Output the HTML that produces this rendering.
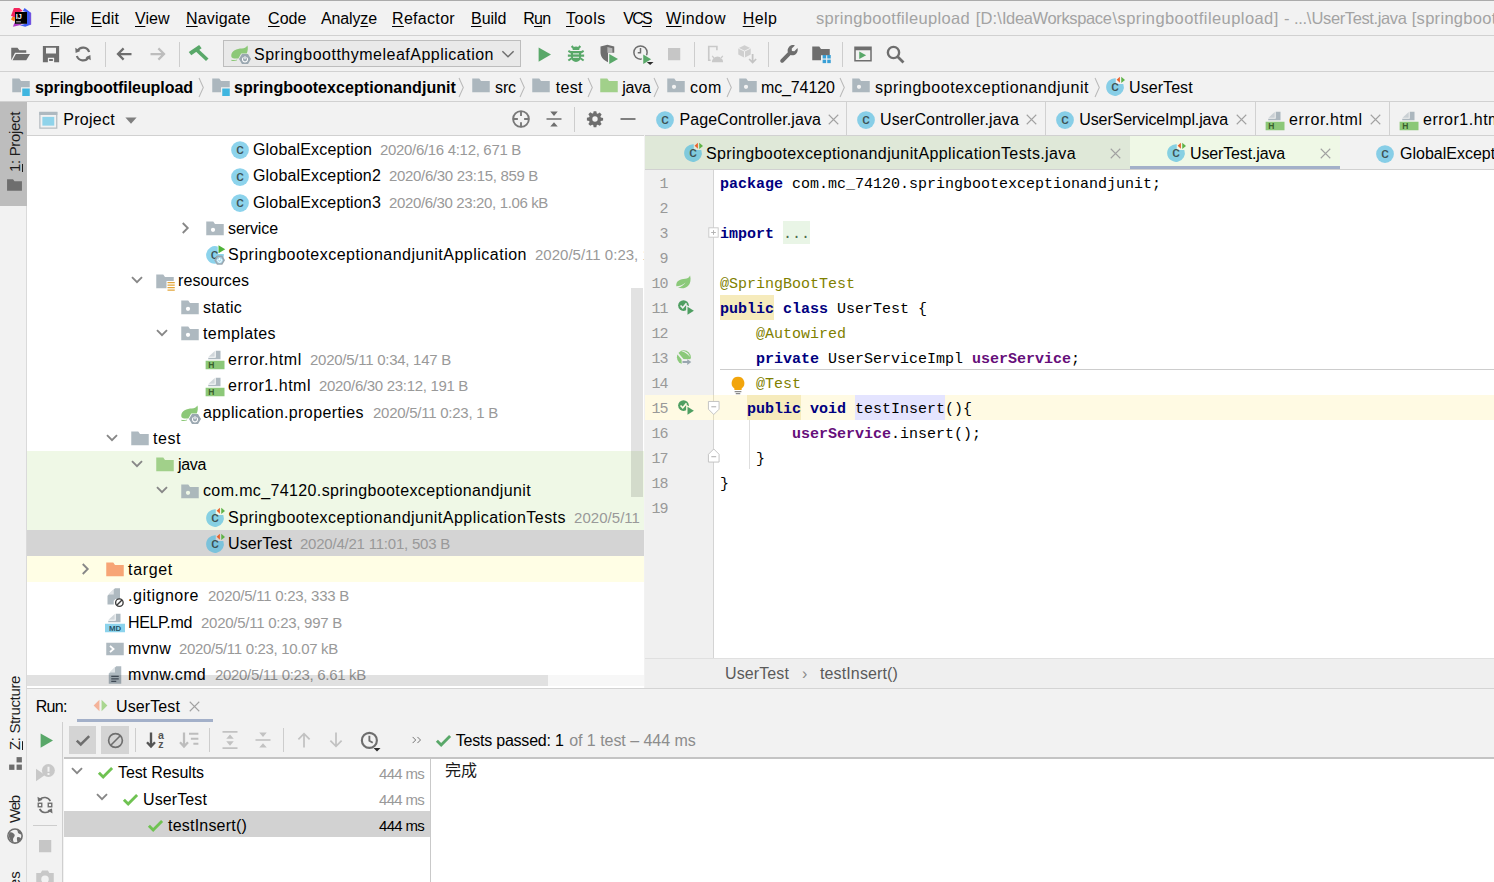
<!DOCTYPE html>
<html><head><meta charset="utf-8"><title>springbootfileupload - UserTest.java</title><style>html,body{margin:0;padding:0}body{width:1494px;height:882px;overflow:hidden;background:#f2f2f2;position:relative;font-family:'Liberation Sans','Noto Sans CJK SC',sans-serif}
#a{position:absolute;left:0;top:0;width:1494px;height:882px;overflow:hidden}
#a>div,#a>span,#a>svg{position:absolute;display:block}
#a>span{white-space:pre}
#a>svg{overflow:visible}
#a>span.r{transform-origin:0 0;transform:rotate(-90deg) translate(0,-50%)}
u{text-decoration:underline;text-underline-offset:2px;text-decoration-thickness:1px}
</style></head><body><div id="a">
<div style="left:0px;top:0px;width:1494px;height:1px;background:#ababab;"></div>
<svg style="left:10px;top:7px;" width="22" height="21" viewBox="10 7 22 21"><path fill="#f4245c" d="M13.900 8h5.400l3.500 3-6.700 1.900-1.100 4.800-4-1.900z"/><path fill="#fc801d" d="M12.300 17.100L11 19.500l3.500 1.900.8-4.300z"/><path fill="#3d5cf5" d="M24.600 8l6.500 4.900v11.700l-5.900 2.200-5.400-1.600 7-1.600V12.300l-4-1.300z"/><path fill="#8a4fd8" d="M29.500 12v13.200l1.600-.6V12.900z" opacity=".7"/><path fill="#b03bc9" d="M12.900 26.800l1.600-4.300 1.600 1.300h6.400l-2.700 1.400z"/><rect x="15" y="12" width="12" height="11.800" fill="#000"/><text x="15.8" y="18.6" font-family="Liberation Sans,sans-serif" font-size="7.3" font-weight="bold" fill="#fff" fill-opacity="1" text-anchor="start">IJ</text><rect x="16.100" y="21.300" width="4.800" height="1" fill="#fff" opacity=".75"/></svg>
<span style="left:50px;top:7.0px;font:16px/24px 'Liberation Sans','Noto Sans CJK SC',sans-serif;color:#000;letter-spacing:-0.324px;"><u>F</u>ile</span>
<span style="left:91px;top:7.0px;font:16px/24px 'Liberation Sans','Noto Sans CJK SC',sans-serif;color:#000;letter-spacing:0.105px;"><u>E</u>dit</span>
<span style="left:135px;top:7.0px;font:16px/24px 'Liberation Sans','Noto Sans CJK SC',sans-serif;color:#000;letter-spacing:0.023px;"><u>V</u>iew</span>
<span style="left:186px;top:7.0px;font:16px/24px 'Liberation Sans','Noto Sans CJK SC',sans-serif;color:#000;letter-spacing:0.168px;"><u>N</u>avigate</span>
<span style="left:268px;top:7.0px;font:16px/24px 'Liberation Sans','Noto Sans CJK SC',sans-serif;color:#000;letter-spacing:0.059px;"><u>C</u>ode</span>
<span style="left:321px;top:7.0px;font:16px/24px 'Liberation Sans','Noto Sans CJK SC',sans-serif;color:#000;letter-spacing:-0.134px;">Analy<u>z</u>e</span>
<span style="left:392px;top:7.0px;font:16px/24px 'Liberation Sans','Noto Sans CJK SC',sans-serif;color:#000;letter-spacing:0.314px;"><u>R</u>efactor</span>
<span style="left:471px;top:7.0px;font:16px/24px 'Liberation Sans','Noto Sans CJK SC',sans-serif;color:#000;letter-spacing:-0.056px;"><u>B</u>uild</span>
<span style="left:523.3px;top:7.0px;font:16px/24px 'Liberation Sans','Noto Sans CJK SC',sans-serif;color:#000;letter-spacing:-0.792px;">R<u>u</u>n</span>
<span style="left:566px;top:7.0px;font:16px/24px 'Liberation Sans','Noto Sans CJK SC',sans-serif;color:#000;letter-spacing:0.468px;"><u>T</u>ools</span>
<span style="left:623.3px;top:7.0px;font:16px/24px 'Liberation Sans','Noto Sans CJK SC',sans-serif;color:#000;letter-spacing:-1.735px;">VC<u>S</u></span>
<span style="left:666px;top:7.0px;font:16px/24px 'Liberation Sans','Noto Sans CJK SC',sans-serif;color:#000;letter-spacing:0.513px;"><u>W</u>indow</span>
<span style="left:742.7px;top:7.0px;font:16px/24px 'Liberation Sans','Noto Sans CJK SC',sans-serif;color:#000;letter-spacing:0.420px;"><u>H</u>elp</span>
<span style="left:816px;top:6.0px;font:16.5px/24px 'Liberation Sans','Noto Sans CJK SC',sans-serif;color:#a3a3a3;letter-spacing:0.315px;">springbootfileupload</span>
<span style="left:975.7px;top:6.0px;font:16.5px/24px 'Liberation Sans','Noto Sans CJK SC',sans-serif;color:#a3a3a3;letter-spacing:0.132px;">[D:\</span>
<span style="left:1001.9px;top:6.0px;font:16.5px/24px 'Liberation Sans','Noto Sans CJK SC',sans-serif;color:#a3a3a3;letter-spacing:-0.365px;">IdeaWorkspace</span>
<span style="left:1112.5px;top:6.0px;font:16.5px/24px 'Liberation Sans','Noto Sans CJK SC',sans-serif;color:#a3a3a3;letter-spacing:0.424px;">\springbootfileupload]</span>
<span style="left:1284px;top:6.0px;font:16.5px/24px 'Liberation Sans','Noto Sans CJK SC',sans-serif;color:#a3a3a3;">-</span>
<span style="left:1293.9px;top:6.0px;font:16.5px/24px 'Liberation Sans','Noto Sans CJK SC',sans-serif;color:#a3a3a3;letter-spacing:-0.336px;">...\</span>
<span style="left:1311.5px;top:6.0px;font:16.5px/24px 'Liberation Sans','Noto Sans CJK SC',sans-serif;color:#a3a3a3;letter-spacing:-0.381px;">UserTest.java</span>
<span style="left:1411.7px;top:6.0px;font:16.5px/24px 'Liberation Sans','Noto Sans CJK SC',sans-serif;color:#a3a3a3;letter-spacing:0.305px;">[springbootexceptionandjunit] - IntelliJ IDEA</span>
<div style="left:0px;top:35px;width:1494px;height:1px;background:#d1d1d1;"></div>
<svg style="left:9.5px;top:44.0px;" width="20" height="20" viewBox="0 0 16 16"><path fill="#6e6e6e" d="M1 13V3h5l1.500 2H13v2H4zM4.700 8H16l-3 5H2z"/></svg>
<svg style="left:40.7px;top:44.0px;" width="20" height="20" viewBox="0 0 16 16"><path fill="#6e6e6e" fill-rule="evenodd" d="M1.500 1.500h13v13h-13zM4 3v4.500h8V3zM5.500 11v3.500h5V11z"/><rect x="6.500" y="12" width="3" height="1.600" fill="#6e6e6e"/></svg>
<svg style="left:73.3px;top:44.0px;" width="20" height="20" viewBox="0 0 16 16"><path fill="none" stroke="#6e6e6e" stroke-width="1.750" d="M12.900 6.400A5.100 5.100 0 0 0 3.600 5.500M3.100 9.600a5.100 5.100 0 0 0 9.300.900"/><path fill="#6e6e6e" d="M1.800 3l.3 4.200 3.800-1.700zM14.200 13l-.3-4.200-3.800 1.700z"/></svg>
<div style="left:104.5px;top:42px;width:1px;height:25px;background:#cdcdcd;"></div>
<svg style="left:114.3px;top:44.0px;" width="20" height="20" viewBox="0 0 16 16"><path fill="none" stroke="#6e6e6e" stroke-width="1.800" d="M14 8H3.500M7.700 3.500L3.200 8l4.500 4.500"/></svg>
<svg style="left:148.3px;top:44.0px;" width="20" height="20" viewBox="0 0 16 16"><path fill="none" stroke="#bdbdbd" stroke-width="1.800" d="M2 8h10.500M8.300 3.500L12.800 8l-4.500 4.500"/></svg>
<div style="left:178.5px;top:42px;width:1px;height:25px;background:#cdcdcd;"></div>
<svg style="left:189.0px;top:44.0px;" width="20" height="20" viewBox="0 0 16 16"><path fill="#59a869" d="M-.2 6.300L8.100.700l2 2.700L1.800 9z"/><path stroke="#59a869" stroke-width="2.900" d="M5.600 4.200l9 8.400"/></svg>
<div style="left:223px;top:40px;width:298px;height:27px;background:#e9e9e9;box-sizing:border-box;border:1px solid #bdbdbd"></div>
<svg style="left:230.0px;top:44.0px;" width="20" height="20" viewBox="0 0 16 16"><path fill="#8cc878" d="M1 9.500C1 5 5.500 3.500 9.500 3.500c2 0 3.300-.6 4.500-2.300.5 2 .3 4.300-.6 6.300H9l-2.300 4c-3 .6-5.700-.2-5.700-2z"/><path fill="#8cc878" d="M1.200 12.600c1.600.4 3 .3 4.600-.3l-.4.9c-1.500.5-3 .5-4.400.1z"/><path fill="#9aa7b0" d="M9.600 8h4.800l2.400 4-2.400 4H9.600l-2.400-4z"/><path fill="none" stroke="#fff" stroke-width=".9" d="M10.800 10.700a2 2 0 1 0 2.400 0M12 9.700v2.500"/></svg>
<span style="left:254px;top:42.5px;font:16px/24px 'Liberation Sans','Noto Sans CJK SC',sans-serif;color:#000;letter-spacing:0.499px;">SpringbootthymeleafApplication</span>
<svg style="left:499.3px;top:44.5px;" width="18" height="18" viewBox="0 0 16 16"><path d="M3 5.500l5 5 5-5" fill="none" stroke="#6e6e6e" stroke-width="1.300"/></svg>
<svg style="left:534.3px;top:44.0px;" width="20" height="20" viewBox="0 0 16 16"><path fill="#59a869" d="M3.700 2.700l9.900 5.700-9.900 5.700z"/></svg>
<svg style="left:566.0px;top:44.0px;" width="20" height="20" viewBox="0 0 16 16"><path fill="#59a869" d="M5.300 4.700a2.700 2.700 0 0 1 5.400 0zM4 5.500h8v4.800a4 4 0 0 1-8 0z"/><path stroke="#59a869" stroke-width="1.700" fill="none" d="M4.500 7L1.900 5.500M4.500 9.300H1.500M4.500 11.400l-2.600 1.800M11.500 7l2.600-1.500M11.500 9.300h3M11.500 11.400l2.600 1.800M5.900 3.300L4.600 1.600M10.100 3.300l1.300-1.700"/><path stroke="#f2f2f2" stroke-width=".8" d="M5.600 7.900h4.800M5.600 10.600h4.800"/></svg>
<svg style="left:598.3px;top:44.0px;" width="20" height="20" viewBox="0 0 16 16"><path fill="#6e6e6e" d="M2 2l5.500-1.500L13 2v5H8v7.500C4 12.500 2 10 2 6.500z"/><path fill="#f2f2f2" d="M7.500 2.300L11.500 3.300V7H7.500z" opacity=".55"/><path fill="#59a869" d="M9 8l7 4-7 4z"/></svg>
<svg style="left:631.7px;top:44.0px;" width="20" height="20" viewBox="0 0 16 16"><circle cx="6.800" cy="6.800" r="5.300" fill="none" stroke="#6e6e6e" stroke-width="1.200"/><path d="M6.800 3.200V7H4.600" fill="none" stroke="#6e6e6e" stroke-width="1.200"/><path fill="#f2f2f2" d="M7.800 6.500l8.500 5.500-8.500 5.500z"/><path fill="#59a869" d="M9 8.300l6.300 3.900L9 16z"/><path fill="#2b2b2b" d="M11.800 14.300h5.400l-2.700 2.500z"/></svg>
<svg style="left:664.0px;top:44.0px;" width="20" height="20" viewBox="0 0 16 16"><rect x="3.200" y="3.200" width="9.800" height="9.800" fill="#c6c6c6"/></svg>
<div style="left:694px;top:42px;width:1px;height:25px;background:#cdcdcd;"></div>
<svg style="left:705.0px;top:44.0px;" width="20" height="20" viewBox="0 0 16 16"><path fill="none" stroke="#c9c9c9" stroke-width="1.300" d="M9.500 5V2H3v11h1.500"/><path fill="#c9c9c9" d="M5.500 14.500a4.500 4.500 0 0 1 9 0zM6.200 9.200l1.500 2-.8.500-1.500-2zM13.800 9.200l-1.500 2 .8.500 1.500-2z"/></svg>
<svg style="left:737.3px;top:44.0px;" width="20" height="20" viewBox="0 0 16 16"><path fill="#cfcfcf" d="M6 1l5 2.300v5L6 11 1 8.300v-5z"/><path fill="none" stroke="#f2f2f2" stroke-width=".8" d="M1 3.300l5 2.400 5-2.400M6 5.700V11"/><path fill="none" stroke="#c4c4c4" stroke-width="1.400" d="M12.500 8v6.500M9.700 12l2.800 2.800 2.800-2.800"/></svg>
<div style="left:768px;top:42px;width:1px;height:25px;background:#cdcdcd;"></div>
<svg style="left:779.0px;top:44.0px;" width="20" height="20" viewBox="0 0 16 16"><path fill="#6e6e6e" d="M14.800 3.200l-2.500 2.500-2-.1-.1-2 2.500-2.500c-1.700-.5-3.600-.1-4.700 1.200-1.100 1.200-1.400 2.800-.9 4.300L1.400 12.300c-.6.600-.6 1.600 0 2.200.6.600 1.600.6 2.200 0l5.700-5.700c1.500.5 3.200.2 4.400-1 1.200-1.200 1.600-3 1.100-4.600z"/></svg>
<svg style="left:810.7px;top:44.0px;" width="20" height="20" viewBox="0 0 16 16"><path fill="#6e6e6e" d="M1 2h5.600L8 4h7v5H8v4H1z"/><rect x="9.300" y="8.800" width="2.800" height="2.800" fill="#389fd6"/><rect x="13" y="8.800" width="2.800" height="2.800" fill="#389fd6"/><rect x="9.300" y="12.500" width="2.800" height="2.800" fill="#389fd6"/><rect x="13" y="12.500" width="2.800" height="2.800" fill="#389fd6"/></svg>
<div style="left:841.5px;top:42px;width:1px;height:25px;background:#cdcdcd;"></div>
<svg style="left:852.7px;top:44.0px;" width="20" height="20" viewBox="0 0 16 16"><path fill="#6e6e6e" fill-rule="evenodd" d="M1 2h14v12H1zM2.200 5v7.800h11.600V5z"/><path fill="#59a869" d="M5 6l5.500 3L5 12z"/></svg>
<svg style="left:885.0px;top:44.0px;" width="20" height="20" viewBox="0 0 16 16"><circle cx="6.800" cy="6.800" r="4.500" fill="none" stroke="#6e6e6e" stroke-width="1.900"/><path d="M10 10l4.800 4.800" stroke="#6e6e6e" stroke-width="2.200"/></svg>
<div style="left:0px;top:71px;width:1494px;height:1px;background:#d1d1d1;"></div>
<svg style="left:11.0px;top:76.0px;" width="20" height="20" viewBox="0 0 16 16"><path fill="#9aa7b0" fill-opacity=".8" d="M1 2h5.6L8 4h7v5H8v4H1z"/><rect x="9" y="10" width="6" height="6" fill="#40b6e0"/></svg>
<span style="left:35px;top:76.0px;font:bold 16px/24px 'Liberation Sans','Noto Sans CJK SC',sans-serif;color:#000;letter-spacing:-0.055px;">springbootfileupload</span>
<svg style="left:195.3px;top:78px;" width="9" height="19" viewBox="0 0 9 20"><path d="M4 0l4.500 10L4 20" fill="none" stroke="#b9b9b9" stroke-width="1.100"/></svg>
<svg style="left:211.0px;top:76.0px;" width="20" height="20" viewBox="0 0 16 16"><path fill="#9aa7b0" fill-opacity=".8" d="M1 2h5.6L8 4h7v5H8v4H1z"/><rect x="9" y="10" width="6" height="6" fill="#40b6e0"/></svg>
<span style="left:234px;top:76.0px;font:bold 16px/24px 'Liberation Sans','Noto Sans CJK SC',sans-serif;color:#000;letter-spacing:0.058px;">springbootexceptionandjunit</span>
<svg style="left:455.3px;top:78px;" width="9" height="19" viewBox="0 0 9 20"><path d="M4 0l4.500 10L4 20" fill="none" stroke="#b9b9b9" stroke-width="1.100"/></svg>
<svg style="left:471.0px;top:76.0px;" width="20" height="20" viewBox="0 0 16 16"><path fill="#9aa7b0" fill-opacity=".8" d="M1 2h5.6L8 4h7v9H1z"/></svg>
<span style="left:495px;top:76.0px;font:16px/24px 'Liberation Sans','Noto Sans CJK SC',sans-serif;color:#000;letter-spacing:-0.109px;">src</span>
<svg style="left:516.3px;top:78px;" width="9" height="19" viewBox="0 0 9 20"><path d="M4 0l4.500 10L4 20" fill="none" stroke="#b9b9b9" stroke-width="1.100"/></svg>
<svg style="left:531.0px;top:76.0px;" width="20" height="20" viewBox="0 0 16 16"><path fill="#9aa7b0" fill-opacity=".8" d="M1 2h5.6L8 4h7v9H1z"/></svg>
<span style="left:555.7px;top:76.0px;font:16px/24px 'Liberation Sans','Noto Sans CJK SC',sans-serif;color:#000;letter-spacing:0.301px;">test</span>
<svg style="left:583.8px;top:78px;" width="9" height="19" viewBox="0 0 9 20"><path d="M4 0l4.500 10L4 20" fill="none" stroke="#b9b9b9" stroke-width="1.100"/></svg>
<svg style="left:598.5px;top:76.0px;" width="20" height="20" viewBox="0 0 16 16"><path fill="#a1d08a" d="M1 2h5.6L8 4h7v9H1z"/></svg>
<span style="left:622.3px;top:76.0px;font:16px/24px 'Liberation Sans','Noto Sans CJK SC',sans-serif;color:#000;letter-spacing:-0.240px;">java</span>
<svg style="left:650.3px;top:78px;" width="9" height="19" viewBox="0 0 9 20"><path d="M4 0l4.500 10L4 20" fill="none" stroke="#b9b9b9" stroke-width="1.100"/></svg>
<svg style="left:666.0px;top:76.0px;" width="20" height="20" viewBox="0 0 16 16"><path fill="#9aa7b0" fill-opacity=".8" fill-rule="evenodd" d="M1 2h5.6L8 4h7v9H1zM6.4 10.3a1.7 1.7 0 1 0 0-3.4 1.7 1.7 0 0 0 0 3.4z"/></svg>
<span style="left:690px;top:76.0px;font:16px/24px 'Liberation Sans','Noto Sans CJK SC',sans-serif;color:#000;letter-spacing:0.489px;">com</span>
<svg style="left:722.5999999999999px;top:78px;" width="9" height="19" viewBox="0 0 9 20"><path d="M4 0l4.500 10L4 20" fill="none" stroke="#b9b9b9" stroke-width="1.100"/></svg>
<svg style="left:737.7px;top:76.0px;" width="20" height="20" viewBox="0 0 16 16"><path fill="#9aa7b0" fill-opacity=".8" fill-rule="evenodd" d="M1 2h5.6L8 4h7v9H1zM6.4 10.3a1.7 1.7 0 1 0 0-3.4 1.7 1.7 0 0 0 0 3.4z"/></svg>
<span style="left:761px;top:76.0px;font:16px/24px 'Liberation Sans','Noto Sans CJK SC',sans-serif;color:#000;letter-spacing:-0.127px;">mc_74120</span>
<svg style="left:836.0px;top:78px;" width="9" height="19" viewBox="0 0 9 20"><path d="M4 0l4.500 10L4 20" fill="none" stroke="#b9b9b9" stroke-width="1.100"/></svg>
<svg style="left:851.0px;top:76.0px;" width="20" height="20" viewBox="0 0 16 16"><path fill="#9aa7b0" fill-opacity=".8" fill-rule="evenodd" d="M1 2h5.6L8 4h7v9H1zM6.4 10.3a1.7 1.7 0 1 0 0-3.4 1.7 1.7 0 0 0 0 3.4z"/></svg>
<span style="left:875px;top:76.0px;font:16px/24px 'Liberation Sans','Noto Sans CJK SC',sans-serif;color:#000;letter-spacing:0.546px;">springbootexceptionandjunit</span>
<svg style="left:1090.8px;top:78px;" width="9" height="19" viewBox="0 0 9 20"><path d="M4 0l4.500 10L4 20" fill="none" stroke="#b9b9b9" stroke-width="1.100"/></svg>
<svg style="left:1105.0px;top:77.3px;" width="20" height="20" viewBox="0 0 16 16"><path d="M8.600 5.500V.930A7.100 7.100 0 1 0 14.650 5.500z" fill="#40b6e0" fill-opacity=".6"/><text stroke="#231f20" stroke-width=".18" stroke-opacity=".6" x="8" y="11.1" font-family="Liberation Sans,sans-serif" font-size="12" font-weight="normal" fill="#231f20" fill-opacity="0.75" text-anchor="middle">c</text><path fill="#e8602b" d="M11.900-.2L9.300 2.150l2.600 2.350z"/><path fill="#5fb347" d="M13-.2l3 2.500-3 2.500z"/></svg>
<span style="left:1129px;top:76.0px;font:16px/24px 'Liberation Sans','Noto Sans CJK SC',sans-serif;color:#000;letter-spacing:0.072px;">UserTest</span>
<div style="left:0px;top:101px;width:1494px;height:1px;background:#d1d1d1;"></div>
<div style="left:0px;top:102px;width:27px;height:104px;background:#bdbdbd;"></div>
<div style="left:26px;top:206px;width:1px;height:676px;background:#dadada;"></div>
<span class="r" style="left:14.8px;top:171.5px;font:15px/24px 'Liberation Sans','Noto Sans CJK SC',sans-serif;color:#1c1c1c;letter-spacing:-0.338px;"><u>1</u>: Project</span>
<svg style="left:6.0px;top:177.0px;" width="17" height="17" viewBox="0 0 16 16"><path fill="#6e6e6e" d="M1 2h5.600L8 4h7v9H1z"/></svg>
<span class="r" style="left:14.8px;top:750px;font:15px/24px 'Liberation Sans','Noto Sans CJK SC',sans-serif;color:#1c1c1c;letter-spacing:-0.365px;"><u>Z</u>: Structure</span>
<svg style="left:6.5px;top:754.5px;" width="17" height="17" viewBox="0 0 16 16"><rect x="9" y="2" width="5" height="5" fill="#6e6e6e"/><rect x="2" y="9" width="5" height="5" fill="#6e6e6e"/><rect x="9" y="9" width="5" height="5" fill="#6e6e6e"/></svg>
<span class="r" style="left:14.8px;top:823px;font:15px/24px 'Liberation Sans','Noto Sans CJK SC',sans-serif;color:#1c1c1c;letter-spacing:-1.193px;">Web</span>
<svg style="left:6.0px;top:827.0px;" width="18" height="18" viewBox="0 0 16 16"><circle cx="8" cy="8" r="6.300" fill="none" stroke="#6e6e6e" stroke-width="1.400"/><path fill="#6e6e6e" d="M3 5c2-1 3 0 4 1s1 2 0 3-1 3 0 4.500C4 13 1.500 9 3 5zM9 2.500c2 .5 1 2 2 3s2.500.5 3.500 2c-.5-3-2.500-5-5.500-5zM10 9c1.500-.500 3 .500 3.500 1.500-1 2-2 3-3.500 3.500.500-1.500-1-3.500 0-5z"/></svg>
<span class="r" style="left:14.8px;top:951px;font:15px/24px 'Liberation Sans','Noto Sans CJK SC',sans-serif;color:#1c1c1c;letter-spacing:0.135px;">2: Favorites</span>
<div style="left:27px;top:102px;width:618px;height:34px;background:#f2f2f2;"></div>
<svg style="left:38.0px;top:109.5px;" width="20" height="20" viewBox="0 0 16 16"><rect x="1.500" y="2" width="13.500" height="12.500" fill="#f2f2f2" stroke="#b5bcc1" stroke-width="1"/><rect x="1" y="1.500" width="14.500" height="2.500" fill="#aeb9c0"/><rect x="3.500" y="5.500" width="9.500" height="7" fill="#8fd3ea"/></svg>
<span style="left:63.3px;top:108.0px;font:16px/24px 'Liberation Sans','Noto Sans CJK SC',sans-serif;color:#000;letter-spacing:0.272px;">Project</span>
<svg style="left:121.0px;top:110.3px;" width="20" height="20" viewBox="0 0 16 16"><path fill="#7f7f7f" d="M3.500 6h9L8 11z"/></svg>
<svg style="left:511.0px;top:109.0px;" width="20" height="20" viewBox="0 0 16 16"><circle cx="8" cy="8" r="6.300" fill="none" stroke="#787878" stroke-width="1.500"/><path stroke="#787878" stroke-width="1.500" d="M8 1.500v4M8 10.500v4M1.500 8h4M10.500 8h4"/></svg>
<svg style="left:543.7px;top:109.0px;" width="20" height="20" viewBox="0 0 16 16"><path stroke="#6e6e6e" stroke-width="1.200" d="M2 8h12"/><path fill="#6e6e6e" d="M5 2h6L8 5.500zM5 14h6L8 10.500z"/></svg>
<div style="left:574px;top:107px;width:1px;height:25px;background:#cdcdcd;"></div>
<svg style="left:585.7px;top:110.0px;" width="18" height="18" viewBox="0 0 16 16"><path fill="#6e6e6e" fill-rule="evenodd" d="M6.800 1h2.400l.4 2 .9.400 1.700-1.100 1.700 1.700-1.100 1.700.4.900 2 .4v2.400l-2 .4-.4.900 1.100 1.700-1.700 1.700-1.700-1.100-.9.400-.4 2H6.800l-.4-2-.9-.4-1.700 1.100-1.700-1.700 1.100-1.700-.4-.9-2-.4V6.800l2-.4.4-.9-1.100-1.700 1.700-1.700 1.700 1.100.9-.4zM8 5.600a2.400 2.400 0 1 0 0 4.800 2.400 2.400 0 0 0 0-4.800z"/></svg>
<svg style="left:617.7px;top:109.0px;" width="20" height="20" viewBox="0 0 16 16"><path stroke="#6e6e6e" stroke-width="1.400" d="M2 8h12"/></svg>
<div style="left:27px;top:135px;width:618px;height:1px;background:#d1d1d1;"></div>
<div style="left:27px;top:136px;width:617px;height:552px;background:#ffffff;"></div>
<div style="left:27px;top:450.9px;width:617px;height:78.75px;background:#eff8e6;"></div>
<div style="left:27px;top:529.65px;width:617px;height:26.25px;background:#d4d4d4;"></div>
<div style="left:27px;top:555.9px;width:617px;height:26.25px;background:#fffee5;"></div>
<svg style="left:230.0px;top:140.43px;" width="20" height="20" viewBox="0 0 16 16"><circle cx="8" cy="8" r="7.1" fill="#40b6e0" fill-opacity=".6"/><text stroke="#231f20" stroke-width=".18" stroke-opacity=".6" x="8" y="11.1" font-family="Liberation Sans,sans-serif" font-size="12" font-weight="normal" fill="#231f20" fill-opacity="0.75" text-anchor="middle">c</text></svg>
<span style="left:253px;top:138.025px;font:16px/24px 'Liberation Sans','Noto Sans CJK SC',sans-serif;color:#000;letter-spacing:0.166px;">GlobalException</span>
<span style="left:380px;top:138.225px;font:15px/24px 'Liberation Sans','Noto Sans CJK SC',sans-serif;color:#999999;letter-spacing:-0.316px;">2020/6/16 4:12, 671 B</span>
<svg style="left:230.0px;top:166.68px;" width="20" height="20" viewBox="0 0 16 16"><circle cx="8" cy="8" r="7.1" fill="#40b6e0" fill-opacity=".6"/><text stroke="#231f20" stroke-width=".18" stroke-opacity=".6" x="8" y="11.1" font-family="Liberation Sans,sans-serif" font-size="12" font-weight="normal" fill="#231f20" fill-opacity="0.75" text-anchor="middle">c</text></svg>
<span style="left:253px;top:164.275px;font:16px/24px 'Liberation Sans','Noto Sans CJK SC',sans-serif;color:#000;letter-spacing:0.161px;">GlobalException2</span>
<span style="left:389px;top:164.475px;font:15px/24px 'Liberation Sans','Noto Sans CJK SC',sans-serif;color:#999999;letter-spacing:-0.317px;">2020/6/30 23:15, 859 B</span>
<svg style="left:230.0px;top:192.93px;" width="20" height="20" viewBox="0 0 16 16"><circle cx="8" cy="8" r="7.1" fill="#40b6e0" fill-opacity=".6"/><text stroke="#231f20" stroke-width=".18" stroke-opacity=".6" x="8" y="11.1" font-family="Liberation Sans,sans-serif" font-size="12" font-weight="normal" fill="#231f20" fill-opacity="0.75" text-anchor="middle">c</text></svg>
<span style="left:253px;top:190.525px;font:16px/24px 'Liberation Sans','Noto Sans CJK SC',sans-serif;color:#000;letter-spacing:0.161px;">GlobalException3</span>
<span style="left:389px;top:190.725px;font:15px/24px 'Liberation Sans','Noto Sans CJK SC',sans-serif;color:#999999;letter-spacing:-0.360px;">2020/6/30 23:20, 1.06 kB</span>
<svg style="left:175.0px;top:217.78px;" width="20" height="20" viewBox="0 0 16 16"><path d="M6.200 4l4 4-4 4" fill="none" stroke="#878787" stroke-width="1.500"/></svg>
<svg style="left:205.0px;top:219.18px;" width="20" height="20" viewBox="0 0 16 16"><path fill="#9aa7b0" fill-opacity=".8" fill-rule="evenodd" d="M1 2h5.6L8 4h7v9H1zM6.4 10.3a1.7 1.7 0 1 0 0-3.4 1.7 1.7 0 0 0 0 3.4z"/></svg>
<span style="left:228px;top:216.775px;font:16px/24px 'Liberation Sans','Noto Sans CJK SC',sans-serif;color:#000;letter-spacing:-0.098px;">service</span>
<svg style="left:205.0px;top:245.43px;" width="20" height="20" viewBox="0 0 16 16"><path d="M10.200 7.200V1.250A7.100 7.100 0 1 0 15.050 7.200z" fill="#40b6e0" fill-opacity=".6"/><text stroke="#231f20" stroke-width=".18" stroke-opacity=".6" x="7.6" y="11.1" font-family="Liberation Sans,sans-serif" font-size="12" font-weight="normal" fill="#231f20" fill-opacity="0.75" text-anchor="middle">c</text><path fill="#4fb33a" d="M10.800.2l5.400 3.100-5.400 3.200z"/><path fill="#9aa7b0" d="M16 12.100l-2.150 3.700h-4.300L7.400 12.100l2.150-3.700h4.300z"/><path fill="#a9dcef" d="M14.500 12.100l-1.400 2.400h-2.800l-1.400-2.400 1.400-2.400h2.800z"/><path fill="none" stroke="#fff" stroke-width=".8" d="M10.700 11.200a1.500 1.500 0 1 0 2 0M11.700 10.300v1.900"/></svg>
<span style="left:228px;top:243.025px;font:16px/24px 'Liberation Sans','Noto Sans CJK SC',sans-serif;color:#000;letter-spacing:0.495px;">SpringbootexceptionandjunitApplication</span>
<span style="left:535px;top:243.225px;font:15px/24px 'Liberation Sans','Noto Sans CJK SC',sans-serif;color:#999999;letter-spacing:0.007px;">2020/5/11 0:23, 1.1 kB</span>
<svg style="left:127.0px;top:270.27px;" width="20" height="20" viewBox="0 0 16 16"><path d="M4 5.700l4 4 4-4" fill="none" stroke="#878787" stroke-width="1.500"/></svg>
<svg style="left:155.0px;top:271.67px;" width="20" height="20" viewBox="0 0 16 16"><path fill="#9aa7b0" fill-opacity=".8" d="M1 2h5.600L8 4h7v3.200H9.200V13H1z"/><path fill="#e2a53a" d="M10 8h5.800v1H10zM10 10h5.800v1H10zM10 12h5.800v1H10zM10 14h5.800v1H10z"/></svg>
<span style="left:178px;top:269.275px;font:16px/24px 'Liberation Sans','Noto Sans CJK SC',sans-serif;color:#000;letter-spacing:0.083px;">resources</span>
<svg style="left:180.0px;top:297.92px;" width="20" height="20" viewBox="0 0 16 16"><path fill="#9aa7b0" fill-opacity=".8" fill-rule="evenodd" d="M1 2h5.6L8 4h7v9H1zM6.4 10.3a1.7 1.7 0 1 0 0-3.4 1.7 1.7 0 0 0 0 3.4z"/></svg>
<span style="left:203px;top:295.525px;font:16px/24px 'Liberation Sans','Noto Sans CJK SC',sans-serif;color:#000;letter-spacing:0.276px;">static</span>
<svg style="left:152.0px;top:322.77px;" width="20" height="20" viewBox="0 0 16 16"><path d="M4 5.700l4 4 4-4" fill="none" stroke="#878787" stroke-width="1.500"/></svg>
<svg style="left:180.0px;top:324.17px;" width="20" height="20" viewBox="0 0 16 16"><path fill="#9aa7b0" fill-opacity=".8" fill-rule="evenodd" d="M1 2h5.6L8 4h7v9H1zM6.4 10.3a1.7 1.7 0 1 0 0-3.4 1.7 1.7 0 0 0 0 3.4z"/></svg>
<span style="left:203px;top:321.775px;font:16px/24px 'Liberation Sans','Noto Sans CJK SC',sans-serif;color:#000;letter-spacing:0.403px;">templates</span>
<svg style="left:205.0px;top:350.42px;" width="20" height="20" viewBox="0 0 16 16"><path fill="#9aa7b0" fill-opacity=".8" d="M8.600.5h3.800v6.800H2.600V6.100h6z"/><path fill="#9aa7b0" fill-opacity=".45" d="M7.800.7v4.700H2.800z"/><rect x=".5" y="8.600" width="15.100" height="6.800" fill="#8cc878"/><text x="2.5" y="14.5" font-family="Liberation Sans,sans-serif" font-size="6.8" font-weight="bold" fill="#2f4f22" fill-opacity="0.9" text-anchor="start">H</text></svg>
<span style="left:228px;top:348.025px;font:16px/24px 'Liberation Sans','Noto Sans CJK SC',sans-serif;color:#000;letter-spacing:0.642px;">error.html</span>
<span style="left:310px;top:348.22499999999997px;font:15px/24px 'Liberation Sans','Noto Sans CJK SC',sans-serif;color:#999999;letter-spacing:-0.263px;">2020/5/11 0:34, 147 B</span>
<svg style="left:205.0px;top:376.67px;" width="20" height="20" viewBox="0 0 16 16"><path fill="#9aa7b0" fill-opacity=".8" d="M8.600.5h3.800v6.800H2.600V6.100h6z"/><path fill="#9aa7b0" fill-opacity=".45" d="M7.800.7v4.700H2.800z"/><rect x=".5" y="8.600" width="15.100" height="6.800" fill="#8cc878"/><text x="2.5" y="14.5" font-family="Liberation Sans,sans-serif" font-size="6.8" font-weight="bold" fill="#2f4f22" fill-opacity="0.9" text-anchor="start">H</text></svg>
<span style="left:228px;top:374.275px;font:16px/24px 'Liberation Sans','Noto Sans CJK SC',sans-serif;color:#000;letter-spacing:0.513px;">error1.html</span>
<span style="left:319px;top:374.47499999999997px;font:15px/24px 'Liberation Sans','Noto Sans CJK SC',sans-serif;color:#999999;letter-spacing:-0.317px;">2020/6/30 23:12, 191 B</span>
<svg style="left:180.0px;top:403.72px;" width="20" height="20" viewBox="0 0 16 16"><path fill="#8cc878" d="M1 9.500C1 5 5.500 3.500 9.500 3.500c2 0 3.300-.6 4.500-2.300.5 2 .3 4.300-.6 6.300H9l-2.300 4c-3 .6-5.700-.2-5.700-2z"/><path fill="#8cc878" d="M1.200 12.600c1.600.4 3 .3 4.600-.3l-.4.9c-1.500.5-3 .5-4.400.1z"/><path fill="#9aa7b0" d="M9.600 8h4.800l2.400 4-2.400 4H9.600l-2.400-4z"/><path fill="none" stroke="#fff" stroke-width=".9" d="M10.800 10.700a2 2 0 1 0 2.400 0M12 9.700v2.500"/></svg>
<span style="left:203px;top:400.525px;font:16px/24px 'Liberation Sans','Noto Sans CJK SC',sans-serif;color:#000;letter-spacing:0.405px;">application.properties</span>
<span style="left:373px;top:400.72499999999997px;font:15px/24px 'Liberation Sans','Noto Sans CJK SC',sans-serif;color:#999999;letter-spacing:-0.255px;">2020/5/11 0:23, 1 B</span>
<svg style="left:102.0px;top:427.77px;" width="20" height="20" viewBox="0 0 16 16"><path d="M4 5.700l4 4 4-4" fill="none" stroke="#878787" stroke-width="1.500"/></svg>
<svg style="left:130.0px;top:429.17px;" width="20" height="20" viewBox="0 0 16 16"><path fill="#9aa7b0" fill-opacity=".8" d="M1 2h5.6L8 4h7v9H1z"/></svg>
<span style="left:153px;top:426.775px;font:16px/24px 'Liberation Sans','Noto Sans CJK SC',sans-serif;color:#000;letter-spacing:0.551px;">test</span>
<svg style="left:127.0px;top:454.02px;" width="20" height="20" viewBox="0 0 16 16"><path d="M4 5.700l4 4 4-4" fill="none" stroke="#878787" stroke-width="1.500"/></svg>
<svg style="left:155.0px;top:455.42px;" width="20" height="20" viewBox="0 0 16 16"><path fill="#a1d08a" d="M1 2h5.6L8 4h7v9H1z"/></svg>
<span style="left:178px;top:453.025px;font:16px/24px 'Liberation Sans','Noto Sans CJK SC',sans-serif;color:#000;letter-spacing:-0.340px;">java</span>
<svg style="left:152.0px;top:480.27px;" width="20" height="20" viewBox="0 0 16 16"><path d="M4 5.700l4 4 4-4" fill="none" stroke="#878787" stroke-width="1.500"/></svg>
<svg style="left:180.0px;top:481.67px;" width="20" height="20" viewBox="0 0 16 16"><path fill="#9aa7b0" fill-opacity=".8" fill-rule="evenodd" d="M1 2h5.6L8 4h7v9H1zM6.4 10.3a1.7 1.7 0 1 0 0-3.4 1.7 1.7 0 0 0 0 3.4z"/></svg>
<span style="left:203px;top:479.275px;font:16px/24px 'Liberation Sans','Noto Sans CJK SC',sans-serif;color:#000;letter-spacing:0.373px;">com.mc_74120.springbootexceptionandjunit</span>
<svg style="left:205.0px;top:507.92px;" width="20" height="20" viewBox="0 0 16 16"><path d="M8.600 5.500V.930A7.100 7.100 0 1 0 14.650 5.500z" fill="#40b6e0" fill-opacity=".6"/><text stroke="#231f20" stroke-width=".18" stroke-opacity=".6" x="8" y="11.1" font-family="Liberation Sans,sans-serif" font-size="12" font-weight="normal" fill="#231f20" fill-opacity="0.75" text-anchor="middle">c</text><path fill="#e8602b" d="M11.900-.2L9.300 2.150l2.600 2.350z"/><path fill="#5fb347" d="M13-.2l3 2.500-3 2.500z"/></svg>
<span style="left:228px;top:505.525px;font:16px/24px 'Liberation Sans','Noto Sans CJK SC',sans-serif;color:#000;letter-spacing:0.476px;">SpringbootexceptionandjunitApplicationTests</span>
<span style="left:574px;top:505.725px;font:15px/24px 'Liberation Sans','Noto Sans CJK SC',sans-serif;color:#999999;letter-spacing:0.042px;width:67px;overflow:hidden;">2020/5/11 0:23, 1 kB</span>
<svg style="left:205.0px;top:534.17px;" width="20" height="20" viewBox="0 0 16 16"><path d="M8.600 5.500V.930A7.100 7.100 0 1 0 14.650 5.500z" fill="#40b6e0" fill-opacity=".6"/><text stroke="#231f20" stroke-width=".18" stroke-opacity=".6" x="8" y="11.1" font-family="Liberation Sans,sans-serif" font-size="12" font-weight="normal" fill="#231f20" fill-opacity="0.75" text-anchor="middle">c</text><path fill="#e8602b" d="M11.900-.2L9.300 2.150l2.600 2.350z"/><path fill="#5fb347" d="M13-.2l3 2.500-3 2.500z"/></svg>
<span style="left:228px;top:531.775px;font:16px/24px 'Liberation Sans','Noto Sans CJK SC',sans-serif;color:#000;letter-spacing:0.109px;">UserTest</span>
<span style="left:300px;top:531.975px;font:15px/24px 'Liberation Sans','Noto Sans CJK SC',sans-serif;color:#999999;letter-spacing:-0.221px;">2020/4/21 11:01, 503 B</span>
<svg style="left:75.0px;top:559.02px;" width="20" height="20" viewBox="0 0 16 16"><path d="M6.200 4l4 4-4 4" fill="none" stroke="#878787" stroke-width="1.500"/></svg>
<svg style="left:105.0px;top:560.42px;" width="20" height="20" viewBox="0 0 16 16"><path fill="#f7a576" d="M1 2h5.6L8 4h7v9H1z"/></svg>
<span style="left:128px;top:558.025px;font:16px/24px 'Liberation Sans','Noto Sans CJK SC',sans-serif;color:#000;letter-spacing:0.680px;">target</span>
<svg style="left:105.0px;top:586.67px;" width="20" height="20" viewBox="0 0 16 16"><path fill="#aeb9c0" d="M8 1h4v8.500H8.500L7 11v3H2V7z"/><path fill="#dfe3e6" d="M7 1.500V6H2.500z"/><circle cx="11.500" cy="12.500" r="3" fill="none" stroke="#3c3c3c" stroke-width="1.100"/><path d="M9.400 14.600l4.200-4.200" stroke="#3c3c3c" stroke-width="1.100"/></svg>
<span style="left:128px;top:584.275px;font:16px/24px 'Liberation Sans','Noto Sans CJK SC',sans-serif;color:#000;letter-spacing:0.517px;">.gitignore</span>
<span style="left:208px;top:584.475px;font:15px/24px 'Liberation Sans','Noto Sans CJK SC',sans-serif;color:#999999;letter-spacing:-0.263px;">2020/5/11 0:23, 333 B</span>
<svg style="left:105.0px;top:612.92px;" width="20" height="20" viewBox="0 0 16 16"><path fill="#9aa7b0" fill-opacity=".8" d="M8.600.5h3.800v6.800H2.600V6.100h6z"/><path fill="#9aa7b0" fill-opacity=".45" d="M7.800.7v4.700H2.800z"/><rect x="0" y="8.600" width="16" height="6.800" fill="#40b6e0" fill-opacity=".6"/><text x="8" y="14.4" font-family="Liberation Sans,sans-serif" font-size="6.3" font-weight="bold" fill="#1c4a5e" fill-opacity="0.95" text-anchor="middle">MD</text></svg>
<span style="left:128px;top:610.525px;font:16px/24px 'Liberation Sans','Noto Sans CJK SC',sans-serif;color:#000;letter-spacing:-0.344px;">HELP.md</span>
<span style="left:201px;top:610.725px;font:15px/24px 'Liberation Sans','Noto Sans CJK SC',sans-serif;color:#999999;letter-spacing:-0.263px;">2020/5/11 0:23, 997 B</span>
<svg style="left:105.0px;top:639.17px;" width="20" height="20" viewBox="0 0 16 16"><rect x="1" y="3" width="14" height="10" fill="#aeb9c0"/><path d="M4 5.500L6.800 8 4 10.500" fill="none" stroke="#fff" stroke-width="1.500"/></svg>
<span style="left:128px;top:636.775px;font:16px/24px 'Liberation Sans','Noto Sans CJK SC',sans-serif;color:#000;letter-spacing:0.305px;">mvnw</span>
<span style="left:179px;top:636.975px;font:15px/24px 'Liberation Sans','Noto Sans CJK SC',sans-serif;color:#999999;letter-spacing:-0.314px;">2020/5/11 0:23, 10.07 kB</span>
<svg style="left:105.0px;top:665.42px;" width="20" height="20" viewBox="0 0 16 16"><path fill="#aeb9c0" d="M9 1h4v14H3V7z"/><path fill="#dfe3e6" d="M8 1.500V6H3.500z"/><path d="M5 9h6M5 11h6M5 13h4" stroke="#4a5560" stroke-width="1"/></svg>
<span style="left:128px;top:663.025px;font:16px/24px 'Liberation Sans','Noto Sans CJK SC',sans-serif;color:#000;letter-spacing:0.303px;">mvnw.cmd</span>
<span style="left:215px;top:663.225px;font:15px/24px 'Liberation Sans','Noto Sans CJK SC',sans-serif;color:#999999;letter-spacing:-0.312px;">2020/5/11 0:23, 6.61 kB</span>
<div style="left:631px;top:288px;width:12px;height:209px;background:rgba(0,0,0,.115);"></div>
<div style="left:27px;top:675px;width:617px;height:11px;background:rgba(0,0,0,.03);"></div>
<div style="left:27px;top:675px;width:521px;height:11px;background:rgba(0,0,0,.085);"></div>
<div style="left:644px;top:102px;width:850px;height:586px;background:#f2f2f2;"></div>
<svg style="left:655.0px;top:109.7px;" width="20" height="20" viewBox="0 0 16 16"><circle cx="8" cy="8" r="7.1" fill="#40b6e0" fill-opacity=".6"/><text stroke="#231f20" stroke-width=".18" stroke-opacity=".6" x="8" y="11.1" font-family="Liberation Sans,sans-serif" font-size="12" font-weight="normal" fill="#231f20" fill-opacity="0.75" text-anchor="middle">c</text></svg>
<span style="left:679.5px;top:108.0px;font:16px/24px 'Liberation Sans','Noto Sans CJK SC',sans-serif;color:#000;letter-spacing:0.098px;">PageController.java</span>
<svg style="left:823.5px;top:109.8px;" width="19" height="19" viewBox="0 0 16 16"><path stroke="#a2a2a2" stroke-width=".9" d="M4 4l8 8M12 4l-8 8"/></svg>
<div style="left:846px;top:102px;width:1px;height:33px;background:#d1d1d1;"></div>
<svg style="left:856.0px;top:109.7px;" width="20" height="20" viewBox="0 0 16 16"><circle cx="8" cy="8" r="7.1" fill="#40b6e0" fill-opacity=".6"/><text stroke="#231f20" stroke-width=".18" stroke-opacity=".6" x="8" y="11.1" font-family="Liberation Sans,sans-serif" font-size="12" font-weight="normal" fill="#231f20" fill-opacity="0.75" text-anchor="middle">c</text></svg>
<span style="left:880px;top:108.0px;font:16px/24px 'Liberation Sans','Noto Sans CJK SC',sans-serif;color:#000;letter-spacing:0.155px;">UserController.java</span>
<svg style="left:1021.5px;top:109.8px;" width="19" height="19" viewBox="0 0 16 16"><path stroke="#a2a2a2" stroke-width=".9" d="M4 4l8 8M12 4l-8 8"/></svg>
<div style="left:1045.3px;top:102px;width:1px;height:33px;background:#d1d1d1;"></div>
<svg style="left:1055.0px;top:109.7px;" width="20" height="20" viewBox="0 0 16 16"><circle cx="8" cy="8" r="7.1" fill="#40b6e0" fill-opacity=".6"/><text stroke="#231f20" stroke-width=".18" stroke-opacity=".6" x="8" y="11.1" font-family="Liberation Sans,sans-serif" font-size="12" font-weight="normal" fill="#231f20" fill-opacity="0.75" text-anchor="middle">c</text></svg>
<span style="left:1079.3px;top:108.0px;font:16px/24px 'Liberation Sans','Noto Sans CJK SC',sans-serif;color:#000;letter-spacing:-0.123px;">UserServiceImpl.java</span>
<svg style="left:1231.5px;top:109.8px;" width="19" height="19" viewBox="0 0 16 16"><path stroke="#a2a2a2" stroke-width=".9" d="M4 4l8 8M12 4l-8 8"/></svg>
<div style="left:1255.3px;top:102px;width:1px;height:33px;background:#d1d1d1;"></div>
<svg style="left:1265.0px;top:110.5px;" width="20" height="20" viewBox="0 0 16 16"><path fill="#9aa7b0" fill-opacity=".8" d="M8.600.5h3.800v6.800H2.600V6.100h6z"/><path fill="#9aa7b0" fill-opacity=".45" d="M7.800.7v4.700H2.800z"/><rect x=".5" y="8.600" width="15.100" height="6.800" fill="#8cc878"/><text x="2.5" y="14.5" font-family="Liberation Sans,sans-serif" font-size="6.8" font-weight="bold" fill="#2f4f22" fill-opacity="0.9" text-anchor="start">H</text></svg>
<span style="left:1289px;top:108.0px;font:16px/24px 'Liberation Sans','Noto Sans CJK SC',sans-serif;color:#000;letter-spacing:0.612px;">error.html</span>
<svg style="left:1365.5px;top:109.8px;" width="19" height="19" viewBox="0 0 16 16"><path stroke="#a2a2a2" stroke-width=".9" d="M4 4l8 8M12 4l-8 8"/></svg>
<div style="left:1389.3px;top:102px;width:1px;height:33px;background:#d1d1d1;"></div>
<svg style="left:1399.0px;top:110.5px;" width="20" height="20" viewBox="0 0 16 16"><path fill="#9aa7b0" fill-opacity=".8" d="M8.600.5h3.800v6.800H2.600V6.100h6z"/><path fill="#9aa7b0" fill-opacity=".45" d="M7.800.7v4.700H2.800z"/><rect x=".5" y="8.600" width="15.100" height="6.800" fill="#8cc878"/><text x="2.5" y="14.5" font-family="Liberation Sans,sans-serif" font-size="6.8" font-weight="bold" fill="#2f4f22" fill-opacity="0.9" text-anchor="start">H</text></svg>
<span style="left:1423px;top:108.0px;font:16px/24px 'Liberation Sans','Noto Sans CJK SC',sans-serif;color:#000;letter-spacing:0.513px;">error1.html</span>
<svg style="left:1499.5px;top:109.8px;" width="19" height="19" viewBox="0 0 16 16"><path stroke="#a2a2a2" stroke-width=".9" d="M4 4l8 8M12 4l-8 8"/></svg>
<div style="left:645px;top:135px;width:849px;height:1px;background:#d1d1d1;"></div>
<div style="left:645px;top:136px;width:485px;height:33px;background:#dfe8d8;"></div>
<div style="left:1130px;top:136px;width:209.5px;height:33px;background:#eff8e6;"></div>
<div style="left:1130px;top:166px;width:209.5px;height:3px;background:#a3b0c9;"></div>
<svg style="left:683.0px;top:143.3px;" width="20" height="20" viewBox="0 0 16 16"><path d="M8.600 5.500V.930A7.100 7.100 0 1 0 14.650 5.500z" fill="#40b6e0" fill-opacity=".6"/><text stroke="#231f20" stroke-width=".18" stroke-opacity=".6" x="8" y="11.1" font-family="Liberation Sans,sans-serif" font-size="12" font-weight="normal" fill="#231f20" fill-opacity="0.75" text-anchor="middle">c</text><path fill="#e8602b" d="M11.900-.2L9.300 2.150l2.600 2.350z"/><path fill="#5fb347" d="M13-.2l3 2.500-3 2.500z"/></svg>
<span style="left:706px;top:142.0px;font:16px/24px 'Liberation Sans','Noto Sans CJK SC',sans-serif;color:#000;letter-spacing:0.389px;">SpringbootexceptionandjunitApplicationTests.java</span>
<svg style="left:1105.5px;top:143.8px;" width="19" height="19" viewBox="0 0 16 16"><path stroke="#a2a2a2" stroke-width=".9" d="M4 4l8 8M12 4l-8 8"/></svg>
<svg style="left:1166.0px;top:143.3px;" width="20" height="20" viewBox="0 0 16 16"><path d="M8.600 5.500V.930A7.100 7.100 0 1 0 14.650 5.500z" fill="#40b6e0" fill-opacity=".6"/><text stroke="#231f20" stroke-width=".18" stroke-opacity=".6" x="8" y="11.1" font-family="Liberation Sans,sans-serif" font-size="12" font-weight="normal" fill="#231f20" fill-opacity="0.75" text-anchor="middle">c</text><path fill="#e8602b" d="M11.900-.2L9.300 2.150l2.600 2.350z"/><path fill="#5fb347" d="M13-.2l3 2.500-3 2.500z"/></svg>
<span style="left:1190px;top:142.0px;font:16px/24px 'Liberation Sans','Noto Sans CJK SC',sans-serif;color:#000;letter-spacing:-0.148px;">UserTest.java</span>
<svg style="left:1315.5px;top:143.8px;" width="19" height="19" viewBox="0 0 16 16"><path stroke="#a2a2a2" stroke-width=".9" d="M4 4l8 8M12 4l-8 8"/></svg>
<svg style="left:1375.0px;top:143.5px;" width="20" height="20" viewBox="0 0 16 16"><circle cx="8" cy="8" r="7.1" fill="#40b6e0" fill-opacity=".6"/><text stroke="#231f20" stroke-width=".18" stroke-opacity=".6" x="8" y="11.1" font-family="Liberation Sans,sans-serif" font-size="12" font-weight="normal" fill="#231f20" fill-opacity="0.75" text-anchor="middle">c</text></svg>
<span style="left:1400px;top:142.0px;font:16px/24px 'Liberation Sans','Noto Sans CJK SC',sans-serif;color:#000;">GlobalException.java</span>
<div style="left:645px;top:169px;width:849px;height:1px;background:#d1d1d1;"></div>
<div style="left:645px;top:170px;width:69px;height:488px;background:#f0f0f0;"></div>
<div style="left:714px;top:170px;width:780px;height:488px;background:#ffffff;"></div>
<div style="left:713px;top:170px;width:1px;height:488px;background:#d4d4d4;"></div>
<div style="left:645px;top:395px;width:849px;height:25px;background:#fffae3;"></div>
<div style="left:713px;top:395px;width:1px;height:25px;background:#e2dcc0;"></div>
<span style="left:659.4px;top:171.7px;font:15px/25px 'Liberation Mono',monospace;color:#999999;">1</span>
<span style="left:659.4px;top:196.7px;font:15px/25px 'Liberation Mono',monospace;color:#999999;">2</span>
<span style="left:659.4px;top:221.7px;font:15px/25px 'Liberation Mono',monospace;color:#999999;">3</span>
<span style="left:659.4px;top:246.7px;font:15px/25px 'Liberation Mono',monospace;color:#999999;">9</span>
<span style="left:651.5px;top:271.7px;font:15px/25px 'Liberation Mono',monospace;color:#999999;letter-spacing:-1.108px;">10</span>
<span style="left:651.5px;top:296.7px;font:15px/25px 'Liberation Mono',monospace;color:#999999;letter-spacing:-1.108px;">11</span>
<span style="left:651.5px;top:321.7px;font:15px/25px 'Liberation Mono',monospace;color:#999999;letter-spacing:-1.108px;">12</span>
<span style="left:651.5px;top:346.7px;font:15px/25px 'Liberation Mono',monospace;color:#999999;letter-spacing:-1.108px;">13</span>
<span style="left:651.5px;top:371.7px;font:15px/25px 'Liberation Mono',monospace;color:#999999;letter-spacing:-1.108px;">14</span>
<span style="left:651.5px;top:396.7px;font:15px/25px 'Liberation Mono',monospace;color:#999999;letter-spacing:-1.108px;">15</span>
<span style="left:651.5px;top:421.7px;font:15px/25px 'Liberation Mono',monospace;color:#999999;letter-spacing:-1.108px;">16</span>
<span style="left:651.5px;top:446.7px;font:15px/25px 'Liberation Mono',monospace;color:#999999;letter-spacing:-1.108px;">17</span>
<span style="left:651.5px;top:471.7px;font:15px/25px 'Liberation Mono',monospace;color:#999999;letter-spacing:-1.108px;">18</span>
<span style="left:651.5px;top:496.7px;font:15px/25px 'Liberation Mono',monospace;color:#999999;letter-spacing:-1.108px;">19</span>
<div style="left:720px;top:295px;width:54px;height:25px;background:#f6ebbc;"></div>
<div style="left:747px;top:395px;width:54px;height:25px;background:#f6ebbc;"></div>
<div style="left:855px;top:395px;width:90px;height:25px;background:#e4e4ff;"></div>
<div style="left:783px;top:220.5px;width:27px;height:23.5px;background:#e9f5e6;"></div>
<div style="left:720px;top:369px;width:774px;height:1px;background:#cdcdcd;"></div>
<div style="left:749px;top:420px;width:1px;height:48.5px;background:#dedede;"></div>
<span style="left:720.0px;top:171.8px;font:bold 15px/25px 'Liberation Mono',monospace;color:#000080;letter-spacing:-0.002px;">package</span>
<span style="left:792.0px;top:171.8px;font:15px/25px 'Liberation Mono',monospace;color:#000;letter-spacing:-0.002px;">com.mc_74120.springbootexceptionandjunit;</span>
<span style="left:720.0px;top:221.8px;font:bold 15px/25px 'Liberation Mono',monospace;color:#000080;letter-spacing:-0.003px;">import</span>
<span style="left:783.0px;top:221.8px;font:15px/25px 'Liberation Mono',monospace;color:#4d6b4d;letter-spacing:-0.005px;">...</span>
<span style="left:720.0px;top:271.8px;font:15px/25px 'Liberation Mono',monospace;color:#808000;letter-spacing:-0.002px;">@SpringBootTest</span>
<span style="left:720.0px;top:296.8px;font:bold 15px/25px 'Liberation Mono',monospace;color:#000080;letter-spacing:-0.003px;">public</span>
<span style="left:783.0px;top:296.8px;font:bold 15px/25px 'Liberation Mono',monospace;color:#000080;letter-spacing:-0.003px;">class</span>
<span style="left:837.0px;top:296.8px;font:15px/25px 'Liberation Mono',monospace;color:#000;letter-spacing:-0.002px;">UserTest {</span>
<span style="left:756.0px;top:321.8px;font:15px/25px 'Liberation Mono',monospace;color:#808000;letter-spacing:-0.002px;">@Autowired</span>
<span style="left:756.0px;top:346.8px;font:bold 15px/25px 'Liberation Mono',monospace;color:#000080;letter-spacing:-0.002px;">private</span>
<span style="left:828.0px;top:346.8px;font:15px/25px 'Liberation Mono',monospace;color:#000;letter-spacing:-0.002px;">UserServiceImpl</span>
<span style="left:972.0px;top:346.8px;font:bold 15px/25px 'Liberation Mono',monospace;color:#660e7a;letter-spacing:-0.003px;">userService</span>
<span style="left:1071.0px;top:346.8px;font:15px/25px 'Liberation Mono',monospace;color:#000;">;</span>
<span style="left:756.0px;top:371.8px;font:15px/25px 'Liberation Mono',monospace;color:#808000;letter-spacing:-0.003px;">@Test</span>
<span style="left:747.0px;top:396.8px;font:bold 15px/25px 'Liberation Mono',monospace;color:#000080;letter-spacing:-0.003px;">public</span>
<span style="left:810.0px;top:396.8px;font:bold 15px/25px 'Liberation Mono',monospace;color:#000080;letter-spacing:-0.004px;">void</span>
<span style="left:855.0px;top:396.8px;font:15px/25px 'Liberation Mono',monospace;color:#000;letter-spacing:-0.002px;">testInsert(){</span>
<span style="left:792.0px;top:421.8px;font:bold 15px/25px 'Liberation Mono',monospace;color:#660e7a;letter-spacing:-0.003px;">userService</span>
<span style="left:891.0px;top:421.8px;font:15px/25px 'Liberation Mono',monospace;color:#000;letter-spacing:-0.002px;">.insert();</span>
<span style="left:756.0px;top:446.8px;font:15px/25px 'Liberation Mono',monospace;color:#000;">}</span>
<span style="left:720.0px;top:471.8px;font:15px/25px 'Liberation Mono',monospace;color:#000;">}</span>
<svg style="left:675.0px;top:273.5px;" width="17" height="17" viewBox="0 0 16 16"><path fill="#8bc97a" d="M1.200 11.500C.8 6 5.500 4.800 9.500 4.500c2-.2 3.700-1.200 4.700-3.200 1 3.800.5 7.500-2 10-2.600 2.500-6.400 2.700-9.400 1.400 3-.7 5.400-2.200 7.200-4.800-2.400 2.300-5.300 3.300-8.800 3.600z"/></svg>
<svg style="left:675.5px;top:297.5px;" width="20" height="20" viewBox="0 0 16 16"><circle cx="6" cy="6" r="4.300" fill="#4f9f62"/><path fill="none" stroke="#f0f0f0" stroke-width="1.300" d="M3.600 6l1.800 1.800L8.400 4.300"/><path fill="#f0f0f0" d="M8.100 5.200l8 5-8 5z"/><path fill="#4f9f62" d="M9.200 6.900l5.100 3.200-5.100 3.200z"/></svg>
<svg style="left:675.5px;top:348.5px;" width="18" height="18" viewBox="0 0 16 16"><circle cx="7" cy="7.400" r="6.200" fill="#8bc97a"/><path fill="#f0f0f0" d="M1.800 3.200l8 9.500-1.300.9L.9 4.500zM4.800 1.900c3.500-.6 6.800 1.800 7.600 5.300-1.900-2.800-4.300-4.500-7.600-5.300z"/><path fill="#f0f0f0" d="M5 9h9v5H5z"/><path fill="#9aa7b0" d="M5.800 10.700h4.200V9l3.600 2.600L10 14.200v-1.700H5.800z"/></svg>
<svg style="left:675.5px;top:397.5px;" width="20" height="20" viewBox="0 0 16 16"><circle cx="6" cy="6" r="4.300" fill="#4f9f62"/><path fill="none" stroke="#fffae3" stroke-width="1.300" d="M3.600 6l1.800 1.800L8.400 4.300"/><path fill="#fffae3" d="M8.100 5.200l8 5-8 5z"/><path fill="#4f9f62" d="M9.200 6.900l5.100 3.200-5.100 3.200z"/></svg>
<svg style="left:728.0px;top:374.5px;" width="20" height="20" viewBox="0 0 16 16"><path fill="#f2a50c" d="M8 1.500a5.100 5.100 0 0 0-2.900 9.300v1.100h5.800v-1.100A5.100 5.100 0 0 0 8 1.500z"/><path stroke="#8a8a8a" stroke-width="1" d="M5.300 13.200h5.400M6.200 14.900h3.600"/></svg>
<svg style="left:706.0px;top:225.0px;" width="15" height="15" viewBox="0 0 16 16"><rect x="3" y="3" width="10" height="10" fill="#fff" stroke="#c8c8c8"/><path stroke="#b0b0b0" d="M5.500 8h5M8 5.500v5"/></svg>
<svg style="left:705.75px;top:400.25px;" width="15.5" height="15.5" viewBox="0 0 16 16"><path fill="#fff" stroke="#c2c2c2" d="M2.500 1.500h11v8L8 15 2.500 9.500z"/><path stroke="#a8a8a8" d="M5.500 7h5"/></svg>
<svg style="left:705.75px;top:447.55px;" width="15.5" height="15.5" viewBox="0 0 16 16"><path fill="#fff" stroke="#c2c2c2" d="M2.500 14.500h11v-8L8 1 2.500 6.500z"/><path stroke="#a8a8a8" d="M5.500 9h5"/></svg>
<div style="left:645px;top:658px;width:849px;height:30px;background:#efefef;"></div>
<div style="left:645px;top:658px;width:849px;height:1px;background:#e0e0e0;"></div>
<span style="left:725px;top:662.0px;font:16px/24px 'Liberation Sans','Noto Sans CJK SC',sans-serif;color:#5a5a5a;letter-spacing:0.109px;">UserTest</span>
<span style="left:802px;top:661.5px;font:16px/24px 'Liberation Sans','Noto Sans CJK SC',sans-serif;color:#8a8a8a;">›</span>
<span style="left:820px;top:662.0px;font:16px/24px 'Liberation Sans','Noto Sans CJK SC',sans-serif;color:#5a5a5a;letter-spacing:0.128px;">testInsert()</span>
<div style="left:27px;top:688px;width:1467px;height:1px;background:#d4d4d4;"></div>
<div style="left:27px;top:689px;width:1467px;height:33px;background:#f2f2f2;"></div>
<span style="left:35.7px;top:694.5px;font:16px/24px 'Liberation Sans','Noto Sans CJK SC',sans-serif;color:#000;letter-spacing:-0.699px;">Run:</span>
<svg style="left:91.5px;top:697.0px;" width="17" height="17" viewBox="0 0 16 16"><path fill="#f4b39a" d="M7 2.500v11L1.500 8z"/><path fill="#a9d690" d="M9 2.500v11L14.500 8z"/></svg>
<span style="left:116px;top:694.5px;font:16px/24px 'Liberation Sans','Noto Sans CJK SC',sans-serif;color:#000;letter-spacing:0.109px;">UserTest</span>
<svg style="left:184.5px;top:696.5px;" width="19" height="19" viewBox="0 0 16 16"><path stroke="#a2a2a2" stroke-width=".9" d="M4 4l8 8M12 4l-8 8"/></svg>
<div style="left:76.7px;top:719px;width:136px;height:3px;background:#a3b0c9;"></div>
<div style="left:27px;top:722px;width:1467px;height:35px;background:#f2f2f2;"></div>
<div style="left:62px;top:722px;width:1px;height:160px;background:#cfcfcf;"></div>
<svg style="left:35.5px;top:729.5px;" width="20" height="20" viewBox="0 0 16 16"><path fill="#59a869" d="M3.700 2.700l9.900 5.700-9.900 5.700z"/></svg>
<div style="left:69px;top:726px;width:27px;height:28px;background:#d4d4d4;"></div>
<svg style="left:73.5px;top:731.0px;" width="18" height="18" viewBox="0 0 16 16"><path fill="none" stroke="#6e6e6e" stroke-width="2.200" d="M2.500 8.500l3.500 3.500L13.500 4.500"/></svg>
<div style="left:101px;top:726px;width:28px;height:28px;background:#d4d4d4;"></div>
<svg style="left:105.5px;top:730.5px;" width="19" height="19" viewBox="0 0 16 16"><circle cx="8" cy="8" r="5.800" fill="none" stroke="#6e6e6e" stroke-width="1.400"/><path stroke="#6e6e6e" stroke-width="1.400" d="M4 12L12 4"/></svg>
<div style="left:134.5px;top:728px;width:1px;height:24px;background:#cdcdcd;"></div>
<svg style="left:145.7px;top:730.0px;" width="20" height="20" viewBox="0 0 16 16"><path fill="none" stroke="#555" stroke-width="1.900" d="M4 2v11.500M.8 9.800l3.200 3.400 3.200-3.400"/><text x="12" y="7.3" font-family="Liberation Sans,sans-serif" font-size="8.5" font-weight="bold" fill="#555" fill-opacity="1" text-anchor="middle">a</text><text x="12" y="14.6" font-family="Liberation Sans,sans-serif" font-size="8.5" font-weight="bold" fill="#555" fill-opacity="1" text-anchor="middle">z</text></svg>
<svg style="left:179.0px;top:730.0px;" width="20" height="20" viewBox="0 0 16 16"><path fill="none" stroke="#bdbdbd" stroke-width="1.800" d="M4 2v11.500M.8 9.800l3.200 3.400 3.200-3.400"/><path stroke="#bdbdbd" stroke-width="1.600" d="M8 3h7.500M9.500 7h6M11.500 11h4"/></svg>
<div style="left:208.5px;top:728px;width:1px;height:24px;background:#cdcdcd;"></div>
<svg style="left:220.0px;top:730.0px;" width="20" height="20" viewBox="0 0 16 16"><path stroke="#c2c2c2" stroke-width="1.300" d="M2 1.500h12M2 14.500h12"/><path fill="#c2c2c2" d="M5 7h6L8 3.500zM5 9h6l-3 3.500z"/></svg>
<svg style="left:252.7px;top:730.0px;" width="20" height="20" viewBox="0 0 16 16"><path stroke="#c2c2c2" stroke-width="1.300" d="M2 8h12"/><path fill="#c2c2c2" d="M5 2h6L8 5.500zM5 14h6L8 10.500z"/></svg>
<div style="left:282.5px;top:728px;width:1px;height:24px;background:#cdcdcd;"></div>
<svg style="left:293.7px;top:730.0px;" width="20" height="20" viewBox="0 0 16 16"><path fill="none" stroke="#c2c2c2" stroke-width="1.400" d="M8 14V3M3.500 7.500L8 3l4.500 4.500"/></svg>
<svg style="left:325.7px;top:730.0px;" width="20" height="20" viewBox="0 0 16 16"><path fill="none" stroke="#c2c2c2" stroke-width="1.400" d="M8 2v11M3.500 8.500L8 13l4.500-4.500"/></svg>
<svg style="left:359.5px;top:730.5px;" width="20" height="20" viewBox="0 0 16 16"><circle cx="7.500" cy="7.500" r="6" fill="none" stroke="#6e6e6e" stroke-width="1.700"/><path fill="none" stroke="#6e6e6e" stroke-width="1.500" d="M7.500 3.800v4l2.700 1.600"/><path fill="#2b2b2b" d="M10.800 13.600h5.600l-2.800 2.700z"/></svg>
<svg style="left:410.0px;top:733.0px;" width="14" height="14" viewBox="0 0 16 16"><path d="M3 4.500L6.500 8 3 11.500M8.500 4.500L12 8l-3.500 3.500" fill="none" stroke="#6e6e6e" stroke-width="1.100"/></svg>
<svg style="left:435.0px;top:731.5px;" width="17" height="17" viewBox="0 0 16 16"><path fill="none" stroke="#59a869" stroke-width="2.700" d="M1.800 8.300l4 4L14.200 3.800"/></svg>
<span style="left:455.7px;top:728.5px;font:16px/24px 'Liberation Sans','Noto Sans CJK SC',sans-serif;color:#000;letter-spacing:-0.211px;">Tests passed: 1</span>
<span style="left:569.2px;top:728.5px;font:16px/24px 'Liberation Sans','Noto Sans CJK SC',sans-serif;color:#8c8c8c;letter-spacing:-0.038px;">of 1 test – 444 ms</span>
<div style="left:64px;top:757px;width:1430px;height:2px;background:#c4c4c4;"></div>
<div style="left:64px;top:759px;width:1430px;height:123px;background:#ffffff;"></div>
<svg style="left:35.0px;top:763.0px;" width="20" height="20" viewBox="0 0 16 16"><path fill="#c8c8c8" d="M.8 4.500l7.200 5-7.200 5z"/><circle cx="10.700" cy="6" r="5.200" fill="#c8c8c8"/><path fill="#f2f2f2" d="M10 3h1.600v4H10zM10 8h1.600v1.500H10z"/></svg>
<svg style="left:35.0px;top:795.0px;" width="20" height="20" viewBox="0 0 16 16"><path fill="none" stroke="#6e6e6e" stroke-width="1.300" d="M12.300 4.800A5.300 5.300 0 0 0 3.800 3.600M3.700 11.200a5.300 5.300 0 0 0 8.500 1.200"/><path fill="#6e6e6e" d="M2 1.300l.4 4 3.700-1.500zM14 14.700l-.4-4-3.700 1.500z"/><rect x="2.600" y="6.600" width="2.800" height="2.800" fill="none" stroke="#6e6e6e" stroke-width="1.100"/><rect x="10.600" y="6.600" width="2.800" height="2.800" fill="none" stroke="#6e6e6e" stroke-width="1.100"/></svg>
<div style="left:33px;top:825px;width:24px;height:1px;background:#cdcdcd;"></div>
<svg style="left:35.0px;top:836.0px;" width="20" height="20" viewBox="0 0 16 16"><rect x="3.200" y="3.200" width="9.800" height="9.800" fill="#c6c6c6"/></svg>
<svg style="left:35.0px;top:868.0px;" width="20" height="20" viewBox="0 0 16 16"><path fill="#c8c8c8" fill-rule="evenodd" d="M1 4h3.500l1.200-2h4.600l1.200 2H15v10H1zM8 6a3 3 0 1 0 0 6 3 3 0 0 0 0-6z"/></svg>
<div style="left:64px;top:811px;width:366px;height:25.5px;background:#d2d2d2;"></div>
<div style="left:430px;top:759px;width:1px;height:123px;background:#c9c9c9;"></div>
<svg style="left:67.0px;top:760.5px;" width="20" height="20" viewBox="0 0 16 16"><path d="M4 5.700l4 4 4-4" fill="none" stroke="#878787" stroke-width="1.500"/></svg>
<svg style="left:96.5px;top:764.0px;" width="17" height="17" viewBox="0 0 16 16"><path fill="none" stroke="#6fc252" stroke-width="2.700" d="M1.800 8.300l4 4L14.200 3.800"/></svg>
<span style="left:118px;top:761.0px;font:16px/24px 'Liberation Sans','Noto Sans CJK SC',sans-serif;color:#000;letter-spacing:-0.095px;">Test Results</span>
<svg style="left:91.7px;top:786.5px;" width="20" height="20" viewBox="0 0 16 16"><path d="M4 5.700l4 4 4-4" fill="none" stroke="#878787" stroke-width="1.500"/></svg>
<svg style="left:121.5px;top:790.5px;" width="17" height="17" viewBox="0 0 16 16"><path fill="none" stroke="#6fc252" stroke-width="2.700" d="M1.800 8.300l4 4L14.200 3.800"/></svg>
<span style="left:143px;top:787.5px;font:16px/24px 'Liberation Sans','Noto Sans CJK SC',sans-serif;color:#000;letter-spacing:0.109px;">UserTest</span>
<svg style="left:146.5px;top:816.5px;" width="17" height="17" viewBox="0 0 16 16"><path fill="none" stroke="#6fc252" stroke-width="2.700" d="M1.800 8.300l4 4L14.200 3.800"/></svg>
<span style="left:168px;top:813.5px;font:16px/24px 'Liberation Sans','Noto Sans CJK SC',sans-serif;color:#000;letter-spacing:0.211px;">testInsert()</span>
<span style="left:379px;top:761.5px;font:15px/24px 'Liberation Sans','Noto Sans CJK SC',sans-serif;color:#999999;letter-spacing:-0.701px;">444 ms</span>
<span style="left:379px;top:788.0px;font:15px/24px 'Liberation Sans','Noto Sans CJK SC',sans-serif;color:#999999;letter-spacing:-0.701px;">444 ms</span>
<span style="left:379px;top:814.0px;font:15px/24px 'Liberation Sans','Noto Sans CJK SC',sans-serif;color:#000;letter-spacing:-0.701px;">444 ms</span>
<span style="left:445px;top:758.5px;font:16px/24px 'Liberation Sans','Noto Sans CJK SC',sans-serif;color:#1a1a1a;">完成</span>
</div></body></html>
